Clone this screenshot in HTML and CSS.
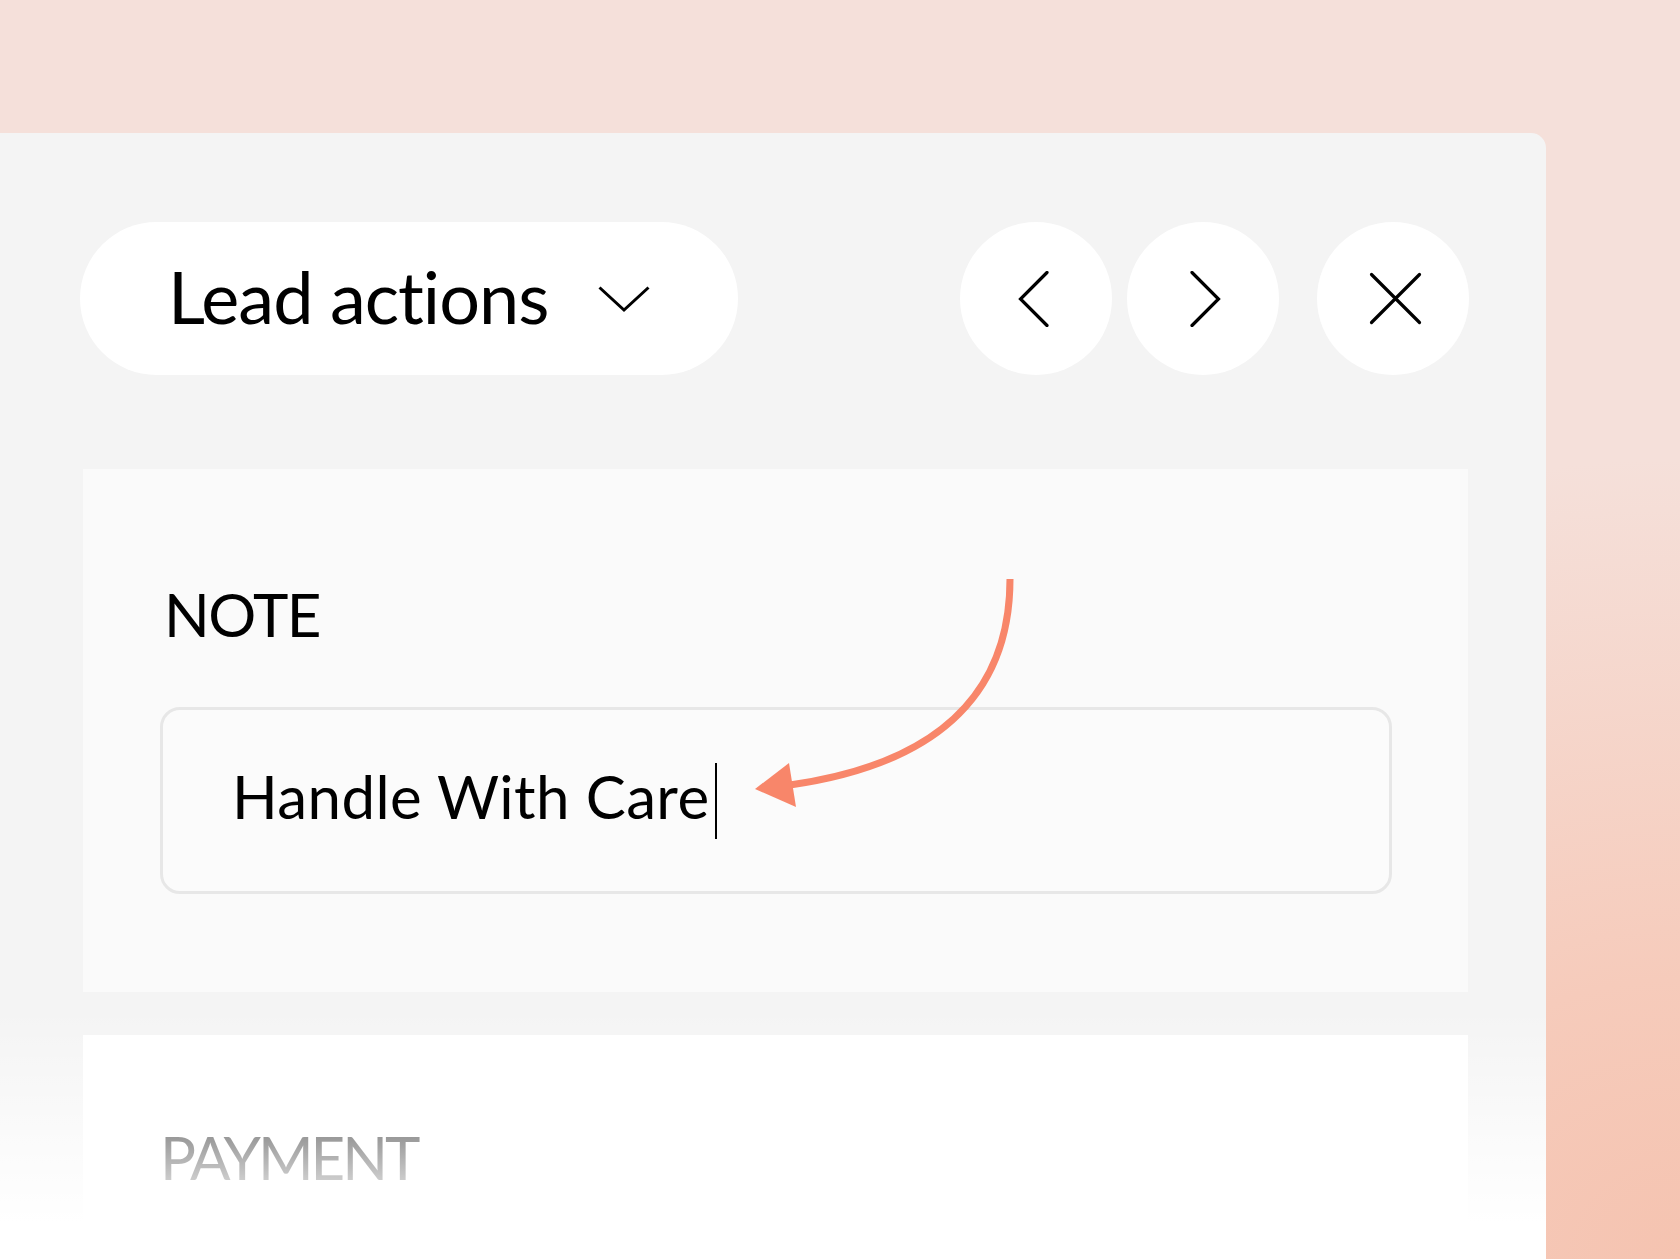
FILE: index.html
```html
<!DOCTYPE html>
<html lang="en">
<head>
<meta charset="utf-8">
<title>Lead actions</title>
<link rel="stylesheet" href="styles.css">
</head>
<body>
<div class="page">
  <div class="panel">
    <div class="toolbar">
      <button class="pill" type="button">
        <span class="pill-text">Lead actions</span>
        <svg class="chev-down" width="52" height="27" viewBox="0 0 52 27"><path d="M1.5 1.5 L26 24 L50.5 1.5" fill="none" stroke="#000" stroke-width="3"/></svg>
      </button>
      <div class="nav">
        <button class="circle prev" type="button" aria-label="Previous">
          <svg width="31" height="56" viewBox="0 0 31 56"><path d="M29 1.5 L2.5 28 L29 54.5" fill="none" stroke="#000" stroke-width="3.2" stroke-linecap="round"/></svg>
        </button>
        <button class="circle next" type="button" aria-label="Next">
          <svg width="31" height="56" viewBox="0 0 31 56"><path d="M2 1.5 L28.5 28 L2 54.5" fill="none" stroke="#000" stroke-width="3.2" stroke-linecap="round"/></svg>
        </button>
        <button class="circle close" type="button" aria-label="Close">
          <svg width="53" height="53" viewBox="0 0 53 53"><path d="M2.5 2.5 L50.5 50.5 M50.5 2.5 L2.5 50.5" fill="none" stroke="#000" stroke-width="3.2" stroke-linecap="round"/></svg>
        </button>
      </div>
    </div>

    <section class="card note">
      <div class="label">NOTE</div>
      <div class="input"><span class="value">Handle With Care</span><span class="caret"></span></div>
    </section>

    <section class="card payment">
      <div class="label">PAYMENT</div>
    </section>
  </div>

  <svg class="arrow" width="300" height="260" viewBox="0 0 300 260">
    <path d="M270 9 C270 130 190 195 50 215" fill="none" stroke="#f8866a" stroke-width="7"/>
    <polygon points="15,219 49,193 56,237" fill="#f8866a"/>
  </svg>
</div>
</body>
</html>
```

FILE: styles.css
```css
html, body {
  margin: 0;
  padding: 0;
}

body {
  font-family: "Lato", "Open Sans", sans-serif;
  color: #000;
}

.page {
  position: relative;
  width: 1680px;
  height: 1259px;
  overflow: hidden;
  box-sizing: border-box;
  padding: 133px 134px 0 0;
  background:
    radial-gradient(ellipse 900px 800px at 100% 100%, #f5c3b0 0%, #f6cbbb 35%, rgba(245, 224, 218, 0) 100%),
    #f5e0da;
}

.panel {
  position: relative;
  height: 1126px;
  box-sizing: border-box;
  padding: 89px 77px 0 80px;
  background: #f4f4f4;
  border-top-right-radius: 15px;
  overflow: hidden;
  display: flex;
  flex-direction: column;
}

.panel::after {
  content: "";
  position: absolute;
  left: 0;
  top: 0;
  right: 0;
  bottom: 0;
  pointer-events: none;
  background: linear-gradient(to bottom, rgba(255, 255, 255, 0) 875px, #fff 1090px);
}

.toolbar {
  display: flex;
  align-items: center;
  height: 153px;
  flex: none;
}

button {
  font: inherit;
  color: inherit;
  border: 0;
  padding: 0;
  margin: 0;
  cursor: pointer;
}

.pill {
  width: 658px;
  height: 153px;
  box-sizing: border-box;
  border-radius: 77px;
  background: #fff;
  display: flex;
  align-items: center;
  padding-left: 88px;
  gap: 50px;
}

.pill-text {
  font-size: 72px;
  line-height: 1;
  letter-spacing: -1px;
  margin-top: -6px;
}

.chev-down {
  display: block;
  margin-top: 2px;
}

.nav {
  margin-left: auto;
  display: flex;
  gap: 15px;
}

.circle {
  width: 152px;
  height: 153px;
  border-radius: 50%;
  background: #fff;
  display: flex;
  align-items: center;
  justify-content: center;
}

.circle svg {
  display: block;
}

.prev svg {
  margin-right: 6px;
}

.next svg {
  margin-left: 5px;
}

.close {
  margin-left: 23px;
}

.close svg {
  margin-left: 4px;
}

.card {
  margin: 0 1px 0 3px;
  box-sizing: border-box;
  padding: 0 76px 0 77px;
}

.note {
  margin-top: 94px;
  height: 523px;
  padding-top: 109px;
  background: #fafafa;
  flex: none;
}

.payment {
  margin-top: 43px;
  flex: 1;
  padding-top: 86px;
  background: #fff;
}

.label {
  font-size: 60px;
  line-height: 72px;
  padding-left: 4px;
  letter-spacing: -1.5px;
}

.payment .label {
  letter-spacing: -3px;
  padding-left: 0;
}

.input {
  display: block;
  margin-top: 57px;
  height: 187px;
  box-sizing: border-box;
  border: 3px solid #e7e7e7;
  border-radius: 20px;
  background: #fbfbfb;
  padding: 50px 0 0 69px;
  font-size: 60px;
  line-height: 72px;
  letter-spacing: 0.4px;
}

.value {
  vertical-align: top;
}

.caret {
  display: inline-block;
  width: 2px;
  height: 76px;
  background: #000;
  margin-left: 6px;
  vertical-align: top;
  margin-top: 3px;
}

.arrow {
  position: absolute;
  left: 740px;
  top: 570px;
  display: block;
}
```
